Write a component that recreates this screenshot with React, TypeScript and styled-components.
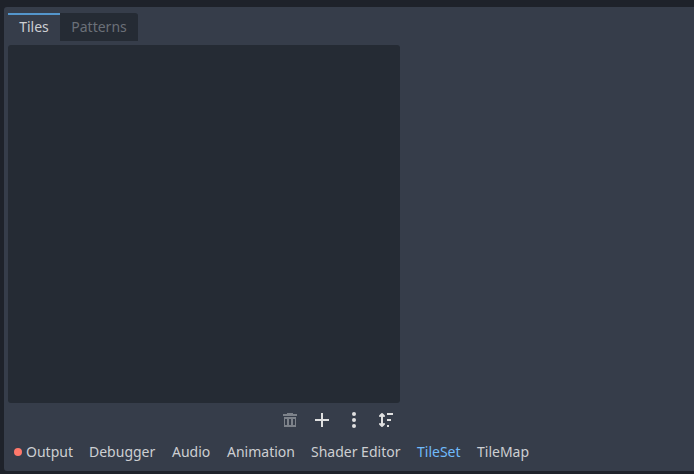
import React from 'react';
import styled, { createGlobalStyle } from 'styled-components';

const Global = createGlobalStyle`
  html, body { margin: 0; background: #1e222a; overflow: hidden; }
  * { box-sizing: border-box; }
`;

const Screen = styled.main`
  width: 694px;
  height: 474px;
  padding: 7px 0 3px 4px;
  background: #1e222a;
  font: 14px/20px 'Noto Sans', sans-serif;
  color: #cdcfd2;
`;

const Panel = styled.section`
  display: flex;
  flex-direction: column;
  height: 464px;
  padding: 6px 4px 0;
  background: #363d4a;
  border-radius: 3px 0 0 3px;
`;

const TabBar = styled.div`
  display: flex;
  height: 28px;
`;

const Tab = styled.button<{ $active?: boolean; $width: number }>`
  width: ${p => p.$width}px;
  height: 28px;
  padding: 0 0 2px;
  border: 0;
  border-top: 2px solid ${p => (p.$active ? '#5496cc' : '#252b34')};
  border-radius: ${p => (p.$active ? '0' : '0 3px 0 0')};
  background: ${p => (p.$active ? '#363d4a' : '#252b34')};
  color: ${p => (p.$active ? '#cdcfd2' : '#6b7078')};
  font: inherit;
  line-height: 24px;
`;

const SourceList = styled.div`
  width: 392px;
  height: 358px;
  margin-top: 4px;
  background: #252b34;
  border-radius: 3px;
`;

const Toolbar = styled.div`
  display: flex;
  justify-content: flex-end;
  gap: 16px;
  width: 392px;
  height: 33px;
  padding: 9px 6px 0 0;
`;

const IconButton = styled.button`
  width: 16px;
  height: 16px;
  padding: 0;
  border: 0;
  background: none;
  color: #e0e0e0;
  &:disabled { color: #7d828a; }
  svg { display: block; fill: currentColor; }
`;

const BottomBar = styled.nav`
  display: flex;
  align-items: center;
  gap: 16px;
  height: 31px;
  padding-left: 6px;
`;

const BottomItem = styled.button<{ $active?: boolean; $width: number }>`
  display: flex;
  align-items: center;
  gap: 4px;
  flex: none;
  width: ${p => p.$width}px;
  padding: 0;
  border: 0;
  background: none;
  color: ${p => (p.$active ? '#70bafa' : '#cdcfd2')};
  font: inherit;
  white-space: nowrap;
`;

const ErrorDot = styled.span`
  flex: none;
  width: 8px;
  height: 8px;
  border-radius: 50%;
  background: #ff786b;
`;

const Icon = ({ children }: { children: React.ReactNode }) => (
  <svg width="16" height="16" viewBox="0 0 16 16">{children}</svg>
);

const panels = [
  { name: 'Output', width: 59 },
  { name: 'Debugger', width: 67 },
  { name: 'Audio', width: 39 },
  { name: 'Animation', width: 68 },
  { name: 'Shader Editor', width: 90 },
  { name: 'TileSet', width: 44 },
  { name: 'TileMap', width: 53 },
];

export default function App() {
  return (
    <>
      <Global />
      <Screen>
        <Panel>
          <TabBar>
            <Tab $active $width={52}>Tiles</Tab>
            <Tab $width={78}>Patterns</Tab>
          </TabBar>
          <SourceList />
          <Toolbar>
            <IconButton disabled aria-label="Remove">
              <Icon>
                <path fillRule="evenodd" d="M5 1v1H1v2h14V2h-4V1zM2 5v10h12V5zM3 7h2v6H3zM7 7h2v6H7zM11 7h2v6h-2z" />
              </Icon>
            </IconButton>
            <IconButton aria-label="Add">
              <Icon><path d="M7 1v6H1v2h6v6h2V9h6V7H9V1z" /></Icon>
            </IconButton>
            <IconButton aria-label="More">
              <Icon>
                <circle cx="8" cy="2" r="2" />
                <circle cx="8" cy="8" r="2" />
                <circle cx="8" cy="14" r="2" />
              </Icon>
            </IconButton>
            <IconButton aria-label="Sort">
              <Icon>
                <path
                  d="M4 2v12M2 4l2-2 2 2M2 12l2 2 2-2"
                  fill="none"
                  stroke="currentColor"
                  strokeWidth="2"
                  strokeLinecap="round"
                  strokeLinejoin="round"
                />
                <path d="M9 1h6v2H9zM9 7h4v2H9zM9 13h2v2H9z" />
              </Icon>
            </IconButton>
          </Toolbar>
          <BottomBar>
            {panels.map(({ name, width }) => (
              <BottomItem key={name} $active={name === 'TileSet'} $width={width}>
                {name === 'Output' && <ErrorDot />}
                {name}
              </BottomItem>
            ))}
          </BottomBar>
        </Panel>
      </Screen>
    </>
  );
}
